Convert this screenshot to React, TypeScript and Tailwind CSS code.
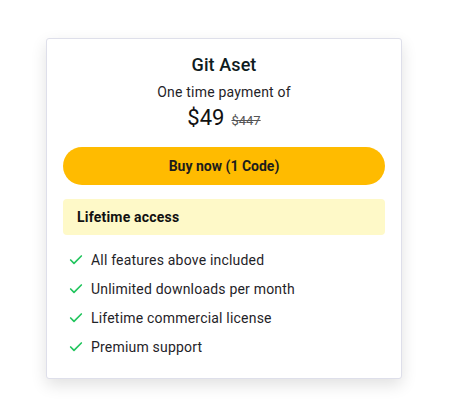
import React from "react";

const Check = () => (
  <svg width="16" height="16" viewBox="0 0 24 24" fill="none" stroke="#22c55e" strokeWidth="2.5" strokeLinecap="round" strokeLinejoin="round" className="shrink-0">
    <path d="M20 6 9 17l-5-5" />
  </svg>
);

export default function App() {
  const features = [
    "All features above included",
    "Unlimited downloads per month",
    "Lifetime commercial license",
    "Premium support",
  ];
  return (
    <div className="w-[454px] h-[414px] bg-white" style={{ fontFamily: "Roboto, 'Noto Sans', sans-serif" }}>
      <div className="pt-[38px] pl-[46px]">
        <div className="w-[356px] h-[341px] bg-white border border-[#dedfea] rounded-[3px] shadow-[0_6px_16px_rgba(0,0,0,0.12)] px-4 pt-3 flex flex-col">
          <div className="text-center text-[18px] leading-[28px] font-medium text-[#0f1c1e] tracking-[0.1px]">Git Aset</div>
          <div className="mt-[3px] text-center text-[14px] leading-[20px] text-[#1f2328] tracking-[0.2px]">One time payment of</div>
          <div className="mt-[2px] flex items-baseline justify-center gap-[7px] leading-[28px]">
            <span className="text-[22px] text-[#111]">$49</span>
            <span className="text-[13px] text-[#555] line-through">$447</span>
          </div>
          <button className="mt-[12px] h-[38px] w-full rounded-full bg-[#ffbb00] text-[14px] font-bold text-[#1c1c1c]">
            Buy now (1 Code)
          </button>
          <div className="mt-[14px] h-[36px] rounded-[4px] bg-[#fef9c8] flex items-center px-[14px] text-[14px] font-bold text-[#111] tracking-[0.2px]">
            Lifetime access
          </div>
          <ul className="mt-[15px] flex flex-col gap-[9px] pl-[5px]">
            {features.map((f) => (
              <li key={f} className="flex items-center gap-[7px] text-[14px] leading-[20px] text-[#1f2328] tracking-[0.2px]">
                <Check />
                <span>{f}</span>
              </li>
            ))}
          </ul>
        </div>
      </div>
    </div>
  );
}
